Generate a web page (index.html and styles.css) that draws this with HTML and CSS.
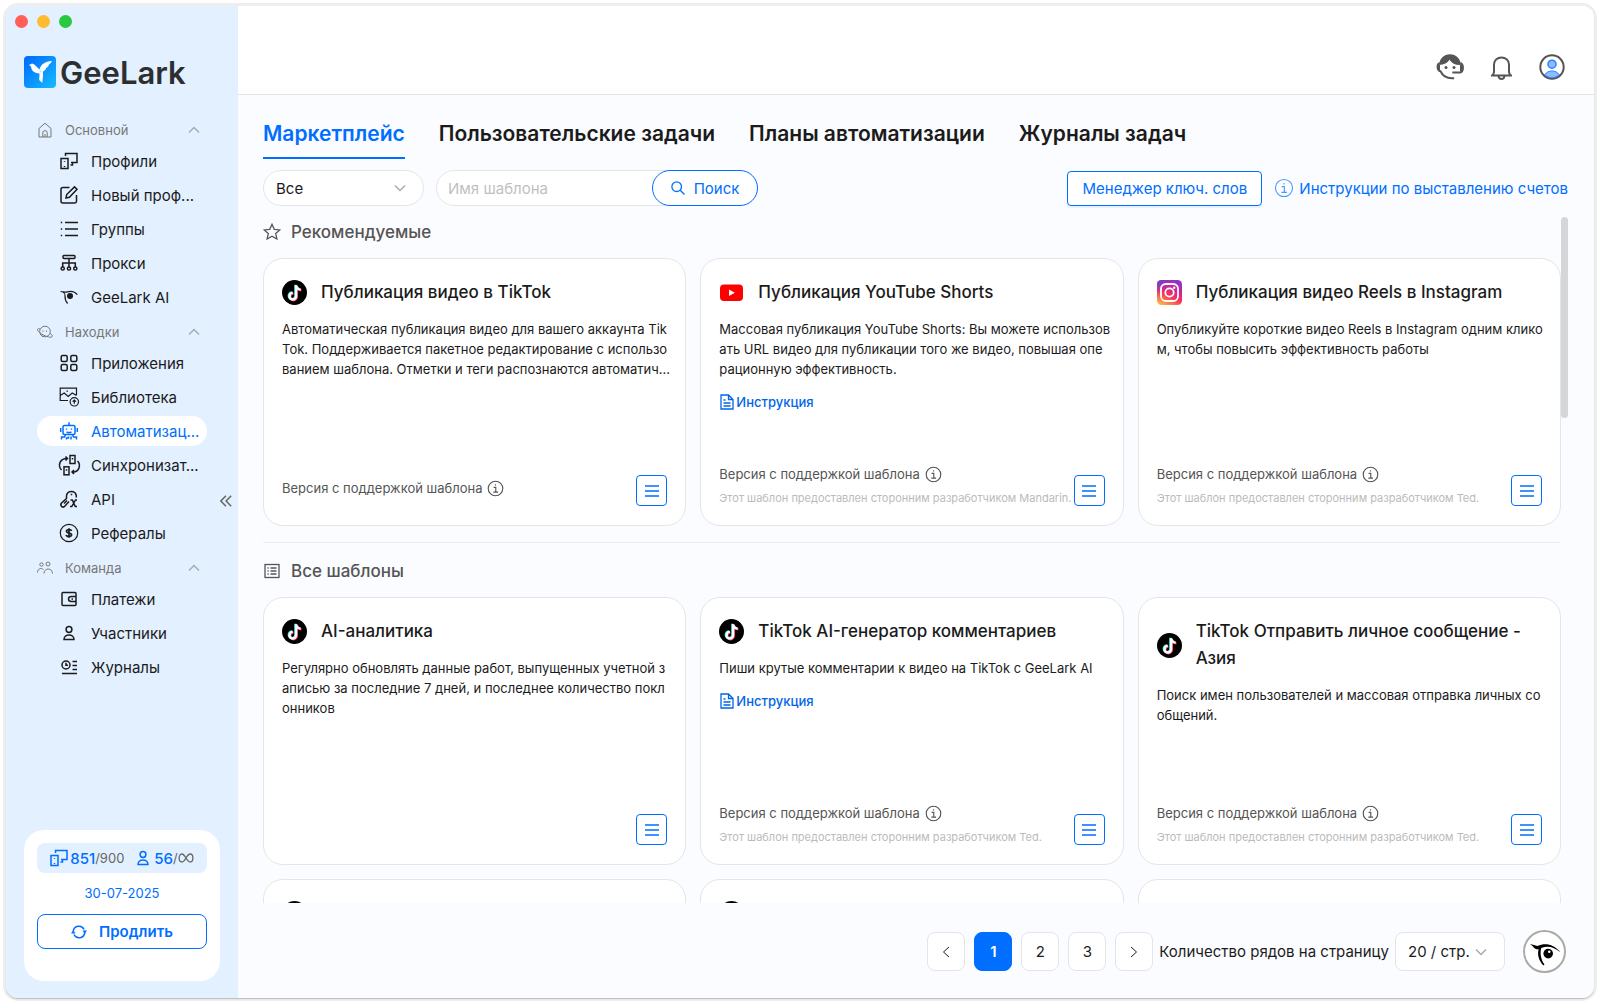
FILE: index.html
```html
<!DOCTYPE html>
<html lang="ru">
<head>
  <meta charset="UTF-8">
  <meta name="viewport" content="width=device-width, initial-scale=1.0">
  <title>GeeLark</title>
  <link rel="stylesheet" href="styles.css">
</head>
<body>
  <!-- Общие иконки -->
  <svg class="sprite" aria-hidden="true">
    <symbol id="i-up" viewBox="0 0 12 8"><path d="M1 6.500 6 1.500l5 5"/></symbol>
    <symbol id="i-down" viewBox="0 0 12 8"><path d="M1 1.500l5 5 5-5"/></symbol>
    <symbol id="i-phones" viewBox="0 0 18 18"><rect x="1" y="6.500" width="7" height="10"/><path d="M5.500 4V1.500H17v9h-6M12.500 10.500v2.500H10.500M4.500 9v.8M4.500 14v1"/></symbol>
    <symbol id="i-member" viewBox="0 0 18 18"><circle cx="9" cy="5.500" r="2.900"/><path d="M4 15.500c0-6 10-6 10 0z"/></symbol>
    <symbol id="i-menu" viewBox="0 0 14 12"><path d="M0 1h14M0 6h14M0 11h14"/></symbol>
    <symbol id="i-info" viewBox="0 0 18 18"><circle cx="9" cy="9" r="7.700"/><path d="M7 7.800h2.300v5M6.700 12.900h5M9 4.400v1.400"/></symbol>
    <symbol id="i-doc" viewBox="0 0 14 16"><path d="M1 1h7.500L13 5.500V15H1zM8.500 1v4.500H13M3.500 6h2M3.500 9h7M3.500 12h7"/></symbol>
    <symbol id="i-tiktok" viewBox="0 0 25 25">
      <circle cx="12.500" cy="12.500" r="12.500" fill="#000"/>
      <g fill="none" stroke-width="2.400">
        <path stroke="#25f4ee" d="M13.400 4.800v11a3.300 3.300 0 1 1-3.300-3.300M13.400 5c.4 2.500 2 4 4.600 4.200"/>
        <path stroke="#fe2c55" d="M14.800 5.900v11a3.300 3.300 0 1 1-3.300-3.300M14.800 6c.4 2.500 2 4 4.600 4.200"/>
        <path stroke="#fff" d="M14.100 5.200v11a3.300 3.300 0 1 1-3.300-3.300M14.100 5.400c.4 2.500 2 4 4.600 4.200"/>
      </g>
    </symbol>
  </svg>

  <div class="window">
    <aside class="sidebar">
      <div class="lights"><span class="red"></span><span class="yellow"></span><span class="green"></span></div>

      <div class="logo">
        <svg width="32" height="32" viewBox="0 0 32 32">
          <defs><linearGradient id="lg" x1="0" y1="0" x2="1" y2="1"><stop offset="0" stop-color="#0067ff"/><stop offset="1" stop-color="#16bcff"/></linearGradient></defs>
          <rect width="32" height="32" rx="4" fill="url(#lg)"/>
          <path d="M5 9l3-1.500 2 .8 5.500 5.200C17 8 21 5.500 28 5c-1 2-2 3-3 3.500l-.8 2-2 1.500-1 2-2.200 1.500v4.500l-.7 7-3.100-3 .3-6.500C10 17 7.500 15 7 10.500z" fill="#fff"/>
          <path d="M15.500 13.500L18 15l-2.500 3z" fill="#cfe6ff"/>
        </svg>
        <span>GeeLark</span>
      </div>

      <nav class="menu">
        <button class="group">
          <svg class="icon" viewBox="0 0 16 16"><path d="M2 6.500 8 1.200l6 5.300V15H2zM5.800 15v-4.200a2.200 2.200 0 0 1 4.400 0V15M8 12v3"/></svg>
          <span>Основной</span>
          <svg class="chevron" viewBox="0 0 12 8"><use href="#i-up"/></svg>
        </button>
        <a href="#" class="item"><svg class="icon" viewBox="0 0 18 18"><use href="#i-phones"/></svg><span>Профили</span></a>
        <a href="#" class="item"><svg class="icon" viewBox="0 0 18 18"><path d="M9.500 1.500H2.800C1.500 1.500 1 2 1 3.300v12c0 1.200.5 1.700 1.800 1.700h12c1.200 0 1.700-.5 1.700-1.700V9M6 12l.7-3.500L14.500.9 17 3.300l-7.600 8z"/></svg><span>Новый проф...</span></a>
        <a href="#" class="item"><svg class="icon" viewBox="0 0 18 18"><path d="M5 2.500h13M5 9h13M5 15.500h13M.8 2.500h1.400M.8 9h1.400M.8 15.500h1.400"/></svg><span>Группы</span></a>
        <a href="#" class="item"><svg class="icon" viewBox="0 0 18 18"><rect x="3" y="1.500" width="12" height="3" rx="1"/><path d="M9 4.500V13M2.700 13V9h12.600v4"/><circle cx="2.700" cy="14.500" r="1.600"/><circle cx="9" cy="14.500" r="1.600"/><circle cx="15.300" cy="14.500" r="1.600"/></svg><span>Прокси</span></a>
        <a href="#" class="item"><svg class="icon thin" viewBox="0 0 18 18"><path d="M.5 3.500c3 .3 4 .5 6 .6 4-1.400 8-1 10.800 2.600M3 4.500c2 .5 2 1 2 3-.2 3.500.8 6 2.600 8"/><circle cx="10" cy="8" r="2.400" fill="currentColor"/></svg><span>GeeLark AI</span></a>

        <button class="group">
          <svg class="icon" viewBox="0 0 16 16"><circle cx="8" cy="7.500" r="5.300"/><path d="M3 5C-1 4-.5 7 5 10.200c5 3 10.500 4 10.300 1.800-.1-1-1-1.800-2.400-2.700M3 10l3 3M6 6.500v1.300M9.500 6.500v1.300"/></svg>
          <span>Находки</span>
          <svg class="chevron" viewBox="0 0 12 8"><use href="#i-up"/></svg>
        </button>
        <a href="#" class="item"><svg class="icon" viewBox="0 0 18 18"><rect x="1.200" y="1.500" width="6" height="6" rx="1.500"/><rect x="10.800" y="1.500" width="6" height="6" rx="1.500"/><rect x="1.200" y="10.500" width="6" height="6" rx="1.500"/><rect x="10.800" y="10.500" width="6" height="6" rx="1.500"/></svg><span>Приложения</span></a>
        <a href="#" class="item"><svg class="icon thin" viewBox="0 0 18 18"><path d="M8 12.500H.2V.2h16.300V7M.2 7.500 4.200 5l4 3.500 4-3.500 4.300 2.500M6.500 3.200h1.400"/><circle cx="14.300" cy="13.800" r="4.200"/><path d="M14.300 15.800v-3.800M12.600 13.700l1.700-1.700 1.700 1.700"/></svg><span>Библиотека</span></a>
        <a href="#" class="item active"><svg class="icon" viewBox="0 0 18 18"><rect x="3" y="3.500" width="12" height="9" rx="1.500"/><path d="M9 3.500V.2M.7 6v4M17.300 6v4M6.500 6.500v1.200M11.500 6.500v1.200M6.500 9.800c1.500 1 3.500 1 5 0M5.500 12.500l-1 2.500H1.500v2.500M12.500 12.500l1 2.500h3v2.500M8.500 14.500v1.500h-2v1.500M11 14.500v3"/></svg><span>Автоматизац...</span></a>
        <a href="#" class="item"><svg class="icon" viewBox="0 0 18 18"><rect x="10" y="-.5" width="5" height="8"/><rect x="4" y="10.800" width="5" height="8"/><path d="M7.500 2.500H5.500C-1 3.500-2 10.500 1.500 14M5.500.5l2 2-2 2M12 16h2c5.500-1 7-7.500 3.500-11M14 14l-2 2 2 2M12.500 2v1.500M6.500 13.300v1.500"/></svg><span>Синхронизат...</span></a>
        <a href="#" class="item"><svg class="icon" viewBox="0 0 18 18"><path d="M6.500 5.500a5 5 0 0 1 9.800 0v2M6.500 5.500v3L1.500 13c-2 3 1.500 5.500 3.500 3l4-4.500M4 13.500l3-3M11.500 3.800v1.500M10.500 10h1.800l3 6.500H17M17 10h-1.500l-3.700 6.500H10"/></svg><span>API</span></a>
        <a href="#" class="item"><svg class="icon thin" viewBox="0 0 18 18"><circle cx="9" cy="9" r="8.700"/><path stroke-width="1.700" d="M11.500 7c-.3-2-5-2-5 .2 0 2.400 5.100 1.200 5.100 3.600 0 2.300-5.100 2.200-5.400 0M9 4.200v9.600"/></svg><span>Рефералы</span></a>

        <button class="group">
          <svg class="icon" viewBox="0 0 16 16"><circle cx="4.500" cy="4.500" r="1.700"/><circle cx="11" cy="4" r="2"/><path d="M.5 12.500c0-4 4-5 6-3M7 13.500c0-6 8.500-6 8.500 0"/></svg>
          <span>Команда</span>
          <svg class="chevron" viewBox="0 0 12 8"><use href="#i-up"/></svg>
        </button>
        <a href="#" class="item"><svg class="icon" viewBox="0 0 18 18"><rect x="2" y="2.500" width="14" height="13" rx="1"/><path d="M16 6.500h-4.500c-4 0-4 5 0 5H16M11.500 9h1.500"/></svg><span>Платежи</span></a>
        <a href="#" class="item"><svg class="icon" viewBox="0 0 18 18"><use href="#i-member"/></svg><span>Участники</span></a>
        <a href="#" class="item"><svg class="icon" viewBox="0 0 18 18"><circle cx="6" cy="7" r="4"/><path d="M6 4.800V7.300h2M12.500 3.500H17M12.500 7.500H17M12.500 11.500H17M2 15.500h15"/></svg><span>Журналы</span></a>
      </nav>

      <button class="collapse" aria-label="Свернуть">
        <svg width="12" height="12" viewBox="0 0 12 12"><path d="M6 .8.9 6 6 11.200M11.200.8 6.100 6l5.100 5.200"/></svg>
      </button>

      <div class="plan">
        <div class="quota">
          <svg class="icon" viewBox="0 0 18 18"><use href="#i-phones"/></svg><b>851</b><i>/900</i>
          <svg class="icon people" viewBox="0 0 18 18"><use href="#i-member"/></svg><b>56</b><i>/</i><svg class="inf" viewBox="0 0 16 10"><path d="M8 5C6.500 2.500 5.500 1 3.900 1 .2 1 .2 9 3.900 9 7.500 9 8.500 1 12.100 1c3.700 0 3.700 8 0 8C10.500 9 9.500 7.500 8 5z"/></svg>
        </div>
        <div class="date">30-07-2025</div>
        <button class="renew">
          <svg width="16" height="16" viewBox="0 0 16 16"><path d="M2.200 7a5.800 5.800 0 0 1 10.900-1.500M13.800 9A5.800 5.800 0 0 1 2.900 10.500"/><path class="solid" d="M0 9.500h4.500L2.300 6zM11.500 6.500H16L13.700 10z"/></svg>
          Продлить
        </button>
      </div>
    </aside>

    <main class="main">
      <header class="topbar">
        <button aria-label="Поддержка">
          <svg width="28" height="28" viewBox="0 0 28 28"><path class="dark" d="M3.200 12C3.500 5.500 8 1.200 14 1.200S24.500 5.500 24.800 12c-5 .3-9-1.500-11.300-5.200C11.500 10 8 12 3.200 12z"/><path class="line" d="M3.700 10c-3 1.500-3 7.500 1 8.500 2 4.500 6 6.700 11 6.700h2.500M24.300 10c3.500 1 3.500 8.500 0 9.500h-8"/><path class="line" d="M3 12v5M25 12v6"/><circle class="dark" cx="10" cy="14.500" r="1.500"/><circle class="dark" cx="18" cy="14.500" r="1.500"/></svg>
        </button>
        <button aria-label="Уведомления">
          <svg width="28" height="28" viewBox="0 0 28 28"><path class="line" d="M4 22.500h21M6 22l1-3v-7.500c0-9.500 15-9.500 15 0V19l1 3M11.500 23c.5 4 5.500 4 6 0"/></svg>
        </button>
        <button aria-label="Аккаунт">
          <svg width="28" height="28" viewBox="0 0 28 28"><circle class="line" cx="14" cy="14" r="11.700"/><circle cx="14" cy="11.200" r="4" fill="#8bbcff" stroke="#2b83ff" stroke-width="1.500"/><path d="M6.800 21.700c3-5 11.400-5 14.400 0-4 4-10.400 4-14.400 0z" fill="#8bbcff" stroke="#2b83ff"/></svg>
        </button>
      </header>

      <div class="content">
        <nav class="tabs">
          <a href="#" class="active">Маркетплейс</a>
          <a href="#">Пользовательские задачи</a>
          <a href="#">Планы автоматизации</a>
          <a href="#">Журналы задач</a>
        </nav>

        <div class="filters">
          <div class="select round">
            <select aria-label="Платформа"><option>Все</option></select>
            <svg viewBox="0 0 12 8"><use href="#i-down"/></svg>
          </div>
          <div class="search">
            <input type="text" placeholder="Имя шаблона" aria-label="Имя шаблона">
            <button>
              <svg width="14" height="14" viewBox="0 0 14 14"><circle cx="5.700" cy="5.700" r="4.800"/><path d="M9.200 9.200l4.300 4.300"/></svg>
              Поиск
            </button>
          </div>
          <button class="keywords">Менеджер ключ. слов</button>
          <a href="#" class="billing"><svg width="20" height="20" viewBox="0 0 18 18"><use href="#i-info"/></svg>Инструкции по выставлению счетов</a>
        </div>

        <div class="list">
          <h2>
            <svg width="18" height="18" viewBox="0 0 18 18"><path d="M9 1.300l2.300 5 5.500.6-4.100 3.700 1.200 5.400L9 13.300 4.100 16l1.200-5.400L1.200 6.900l5.500-.6z"/></svg>
            Рекомендуемые
          </h2>
          <div class="cards">
            <article class="card">
              <h3><svg class="brand" viewBox="0 0 25 25"><use href="#i-tiktok"/></svg><span>Публикация видео в TikTok</span></h3>
              <p>Автоматическая публикация видео для вашего аккаунта Tik<br>Tok. Поддерживается пакетное редактирование с использо<br>ванием шаблона. Отметки и теги распознаются автоматич...</p>
              <footer>
                <div class="version single">Версия с поддержкой шаблона <svg viewBox="0 0 18 18"><use href="#i-info"/></svg></div>
                <button aria-label="Меню"><svg viewBox="0 0 14 12"><use href="#i-menu"/></svg></button>
              </footer>
            </article>
            <article class="card">
              <h3><svg class="brand" viewBox="0 0 25 25"><rect x="1" y="4.500" width="23" height="16.500" rx="4" fill="#f00"/><path d="M10 9.500v6.500l5.800-3.200z" fill="#fff"/></svg><span>Публикация YouTube Shorts</span></h3>
              <p>Массовая публикация YouTube Shorts: Вы можете использов<br>ать URL видео для публикации того же видео, повышая опе<br>рационную эффективность.</p>
              <a href="#" class="guide"><svg viewBox="0 0 14 16"><use href="#i-doc"/></svg>Инструкция</a>
              <footer>
                <div>
                  <div class="version">Версия с поддержкой шаблона <svg viewBox="0 0 18 18"><use href="#i-info"/></svg></div>
                  <small>Этот шаблон предоставлен сторонним разработчиком Mandarin.</small>
                </div>
                <button aria-label="Меню"><svg viewBox="0 0 14 12"><use href="#i-menu"/></svg></button>
              </footer>
            </article>
            <article class="card">
              <h3>
                <svg class="brand" viewBox="0 0 25 25">
                  <defs>
                    <linearGradient id="ig" x1="0.200" y1="1" x2="0.700" y2="0"><stop offset="0" stop-color="#ffb545"/><stop offset=".4" stop-color="#f5355b"/><stop offset=".7" stop-color="#d0209a"/><stop offset="1" stop-color="#8a35c8"/></linearGradient>
                    <radialGradient id="ig2" cx="0" cy="0" r="0.600"><stop offset="0" stop-color="#4a50d8"/><stop offset="1" stop-color="#8a35c8" stop-opacity="0"/></radialGradient>
                  </defs>
                  <rect width="25" height="25" rx="4.500" fill="url(#ig)"/><rect width="25" height="25" rx="4.500" fill="url(#ig2)"/>
                  <g fill="none" stroke="#fff" stroke-width="1.800"><rect x="4" y="4" width="17" height="17" rx="4.800"/><circle cx="12.500" cy="12.500" r="4.200"/></g><circle cx="17.200" cy="7.800" r="1.200" fill="#fff"/>
                </svg>
                <span>Публикация видео Reels в Instagram</span>
              </h3>
              <p>Опубликуйте короткие видео Reels в Instagram одним клико<br>м, чтобы повысить эффективность работы</p>
              <footer>
                <div>
                  <div class="version">Версия с поддержкой шаблона <svg viewBox="0 0 18 18"><use href="#i-info"/></svg></div>
                  <small>Этот шаблон предоставлен сторонним разработчиком Ted.</small>
                </div>
                <button aria-label="Меню"><svg viewBox="0 0 14 12"><use href="#i-menu"/></svg></button>
              </footer>
            </article>
          </div>

          <hr>

          <h2>
            <svg width="18" height="18" viewBox="0 0 18 18"><rect x="2" y="2.500" width="14" height="13"/><path d="M7.500 6h6M7.500 9h6M7.500 12h6M4.500 6h1.200M4.500 9h1.200M4.500 12h1.200"/></svg>
            Все шаблоны
          </h2>
          <div class="cards">
            <article class="card">
              <h3><svg class="brand" viewBox="0 0 25 25"><use href="#i-tiktok"/></svg><span>AI-аналитика</span></h3>
              <p>Регулярно обновлять данные работ, выпущенных учетной з<br>аписью за последние 7 дней, и последнее количество покл<br>онников</p>
              <footer>
                <button aria-label="Меню"><svg viewBox="0 0 14 12"><use href="#i-menu"/></svg></button>
              </footer>
            </article>
            <article class="card">
              <h3><svg class="brand" viewBox="0 0 25 25"><use href="#i-tiktok"/></svg><span>TikTok AI-генератор комментариев</span></h3>
              <p>Пиши крутые комментарии к видео на TikTok с GeeLark AI</p>
              <a href="#" class="guide"><svg viewBox="0 0 14 16"><use href="#i-doc"/></svg>Инструкция</a>
              <footer>
                <div>
                  <div class="version">Версия с поддержкой шаблона <svg viewBox="0 0 18 18"><use href="#i-info"/></svg></div>
                  <small>Этот шаблон предоставлен сторонним разработчиком Ted.</small>
                </div>
                <button aria-label="Меню"><svg viewBox="0 0 14 12"><use href="#i-menu"/></svg></button>
              </footer>
            </article>
            <article class="card">
              <h3><svg class="brand" viewBox="0 0 25 25"><use href="#i-tiktok"/></svg><span>TikTok Отправить личное сообщение -<br>Азия</span></h3>
              <p>Поиск имен пользователей и массовая отправка личных со<br>общений.</p>
              <footer>
                <div>
                  <div class="version">Версия с поддержкой шаблона <svg viewBox="0 0 18 18"><use href="#i-info"/></svg></div>
                  <small>Этот шаблон предоставлен сторонним разработчиком Ted.</small>
                </div>
                <button aria-label="Меню"><svg viewBox="0 0 14 12"><use href="#i-menu"/></svg></button>
              </footer>
            </article>
            <article class="card"><h3><svg class="brand" viewBox="0 0 25 25"><use href="#i-tiktok"/></svg></h3></article>
            <article class="card"><h3><svg class="brand" viewBox="0 0 25 25"><use href="#i-tiktok"/></svg></h3></article>
            <article class="card"></article>
          </div>
        </div>
        <div class="scrollbar"></div>

        <div class="pager">
          <button aria-label="Назад"><svg width="8" height="12" viewBox="0 0 8 12"><path d="M7 1 1.500 6 7 11"/></svg></button>
          <button class="current">1</button>
          <button>2</button>
          <button>3</button>
          <button aria-label="Вперёд"><svg width="8" height="12" viewBox="0 0 8 12"><path d="M1 1l5.500 5L1 11"/></svg></button>
          <label for="rows">Количество рядов на страницу</label>
          <div class="select rows">
            <select id="rows"><option>20 / стр.</option></select>
            <svg viewBox="0 0 12 8"><use href="#i-down"/></svg>
          </div>
          <button class="assistant" aria-label="GeeLark AI">
            <svg width="32" height="32" viewBox="0 0 30 30"><path d="M1 7.500l7 1.800c7-3 15-2 21.500 6-6-5-12-6.500-18-4-1.500 5 0 11.500 3 15.500l-1 .8C9.500 23.500 7.500 18 9 12.500c-3-.2-4.500-1-5-2.500z"/><circle cx="18" cy="16.500" r="4.500"/><circle cx="19" cy="14.800" r="1.200" fill="#fff"/></svg>
          </button>
        </div>
      </div>
    </main>
  </div>
</body>
</html>
```
FILE: styles.css
```css
:root {
  --blue: #006eff;
  --text: #1b1b1b;
  --muted: #555;
  --border: #e4e5e7;
  --side: #e3f0ff;
}

* {
  box-sizing: border-box;
}

body {
  margin: 0;
  padding: 6px 6px 7px;
  height: 100vh;
  background: #fff;
  color: var(--text);
  font-family: Inter, "Liberation Sans", sans-serif;
  font-size: 15px;
}

button, input, select {
  font: inherit;
  color: inherit;
}

button {
  padding: 0;
  border: none;
  background: none;
  cursor: pointer;
}

a {
  color: inherit;
  text-decoration: none;
}

svg {
  flex: none;
  fill: none;
  stroke: currentColor;
}

.sprite {
  position: absolute;
  width: 0;
  height: 0;
}

.window {
  display: flex;
  height: 100%;
  border-radius: 12px;
  overflow: hidden;
  box-shadow: 0 1px 1px #bbb, 0 0 0 3px #eee;
}

/* Боковая панель */
.sidebar {
  position: relative;
  display: flex;
  flex-direction: column;
  flex: none;
  width: 232px;
  padding: 9px 18px 17px;
  background: var(--side);
}

.lights {
  display: flex;
  gap: 9px;
  margin-left: -9px;
}

.lights span {
  width: 13px;
  height: 13px;
  border-radius: 50%;
}

.red { background: #ff5f57; }
.yellow { background: #febc2e; }
.green { background: #28c840; }

.logo {
  display: flex;
  align-items: center;
  gap: 4px;
  height: 32px;
  margin: 28px 0;
  font-size: 31px;
  font-weight: 600;
  color: #2c2e30;
}

.logo svg {
  stroke: none;
}

.menu {
  display: flex;
  flex: 1;
  flex-direction: column;
}

.group {
  display: flex;
  align-items: center;
  height: 28px;
  padding: 0 20px 0 13px;
  font-size: 13px;
  color: #777;
}

.group ~ .group {
  margin-top: 4px;
}

.group .icon {
  width: 16px;
  height: 16px;
  margin-right: 12px;
}

.chevron {
  width: 12px;
  height: 8px;
  margin-left: auto;
  color: #aaa;
  stroke-width: 1.5px;
}

.item {
  display: flex;
  align-items: center;
  gap: 13px;
  height: 30px;
  margin: 2px 13px;
  padding-left: 23px;
  border-radius: 15px;
  white-space: nowrap;
}

.item .icon {
  width: 18px;
  height: 18px;
  overflow: visible;
  stroke-width: 1.5px;
}

.item .thin {
  stroke-width: 1.2px;
}

.item.active {
  background: #fff;
  color: var(--blue);
}

.collapse {
  position: absolute;
  right: 6px;
  top: 489px;
  line-height: 0;
  color: #666;
  stroke-width: 1.5px;
}

.plan {
  display: flex;
  flex-direction: column;
  height: 151px;
  padding: 13px;
  border-radius: 20px;
  background: #fff;
  color: var(--blue);
}

.quota {
  display: flex;
  align-items: center;
  justify-content: center;
  height: 30px;
  border-radius: 8px;
  background: var(--side);
}

.quota .icon {
  width: 18px;
  height: 18px;
  margin-right: 2px;
  stroke-width: 1.5px;
}

.quota .people {
  margin-left: 10px;
}

.quota b {
  font-weight: 500;
}

.quota i {
  font-style: normal;
  font-size: 13px;
  color: #666;
}

.quota .inf {
  width: 16px;
  height: 10px;
  color: #666;
  stroke-width: 1.3px;
}

.date {
  line-height: 41px;
  font-size: 13px;
  text-align: center;
}

.renew {
  display: flex;
  align-items: center;
  justify-content: center;
  gap: 12px;
  height: 35px;
  border: 1px solid var(--blue);
  border-radius: 8px;
  font-weight: 600;
}

.renew svg {
  stroke-width: 1.5px;
}

.renew .solid {
  fill: currentColor;
  stroke: none;
}

/* Основная часть */
.main {
  display: flex;
  flex: 1;
  flex-direction: column;
  min-width: 0;
  background: #fbfcff;
}

.topbar {
  display: flex;
  justify-content: flex-end;
  align-items: flex-end;
  gap: 23px;
  flex: none;
  height: 89px;
  padding: 0 28px 13px;
  border-bottom: 1px solid var(--border);
  background: #fff;
}

.topbar button {
  height: 28px;
  color: #555;
}

.topbar .line {
  stroke-width: 2px;
}

.topbar .dark {
  fill: currentColor;
  stroke: none;
}

.content {
  position: relative;
  display: flex;
  flex: 1;
  flex-direction: column;
  min-height: 0;
  padding: 22px 26px 25px 25px;
}

.tabs {
  display: flex;
  gap: 34px;
  font-size: 21px;
  font-weight: 600;
}

.tabs a {
  height: 42px;
  line-height: 34px;
}

.tabs .active {
  color: var(--blue);
  border-bottom: 2px solid var(--blue);
}

.filters {
  display: flex;
  align-items: center;
  margin-top: 11px;
}

.select {
  position: relative;
}

.select select {
  width: 100%;
  height: 100%;
  padding: 0 12px;
  border: 1px solid var(--border);
  border-radius: 8px;
  background: #fff;
  appearance: none;
}

.select svg {
  position: absolute;
  top: calc(50% - 4px);
  right: 18px;
  width: 12px;
  height: 8px;
  color: #aaa;
  stroke-width: 1.5px;
  pointer-events: none;
}

.round {
  width: 161px;
  height: 36px;
  margin-right: 12px;
}

.round select {
  border-radius: 18px;
}

.search {
  display: flex;
  width: 322px;
  height: 36px;
  border: 1px solid var(--border);
  border-radius: 18px;
  background: #fff;
}

.search input {
  flex: 1;
  min-width: 0;
  padding: 0 11px;
  border: none;
  background: none;
  outline: none;
}

.search input::placeholder {
  color: #bfbfbf;
}

.search button {
  display: flex;
  align-items: center;
  justify-content: center;
  gap: 9px;
  width: 106px;
  margin: -1px;
  border: 1px solid var(--blue);
  border-radius: 18px;
  background: #fff;
  color: var(--blue);
}

.search svg {
  stroke-width: 1.3px;
}

.keywords {
  width: 195px;
  height: 35px;
  margin-left: auto;
  border: 1px solid var(--blue);
  border-radius: 4px;
  background: #fff;
  color: var(--blue);
  box-shadow: 0 2px 0 #e6f2ff;
}

.billing {
  display: flex;
  align-items: center;
  gap: 5px;
  margin-left: 12px;
  color: var(--blue);
}

.billing svg {
  opacity: 0.7;
}

.list {
  flex: 1;
  min-height: 0;
  margin-right: 7px;
  overflow: hidden;
}

.list h2 {
  display: flex;
  align-items: center;
  gap: 10px;
  height: 52px;
  margin: 0;
  font-size: 17px;
  font-weight: 500;
  color: var(--muted);
}

.list h2 svg {
  stroke-width: 1.3px;
}

.list hr {
  margin: 16px 0 2px;
  border: none;
  border-top: 1px solid #eceef0;
}

.cards {
  display: grid;
  grid-template-columns: repeat(3, 1fr);
  grid-auto-rows: 268px;
  gap: 14px;
}

.card {
  display: flex;
  flex-direction: column;
  min-width: 0;
  padding: 20px 18px 13px;
  border: 1px solid var(--border);
  border-radius: 20px;
  background: #fff;
}

.card h3 {
  display: flex;
  align-items: center;
  gap: 14px;
  min-height: 27px;
  margin: 0 0 13px;
  font-size: 17px;
  font-weight: 500;
  line-height: 27px;
}

.brand {
  width: 25px;
  height: 25px;
  stroke: none;
}

.card p {
  margin: 0;
  font-size: 13px;
  line-height: 20px;
  white-space: nowrap;
}

.guide {
  display: flex;
  align-items: center;
  gap: 2px;
  margin-top: 13px;
  font-size: 13px;
  font-weight: 500;
  line-height: 20px;
  color: #0065e8;
}

.guide svg {
  width: 14px;
  height: 16px;
  margin-left: 1px;
  stroke-width: 1.3px;
}

.card footer {
  display: flex;
  align-items: flex-end;
  justify-content: space-between;
  margin-top: auto;
}

.card footer button {
  display: flex;
  align-items: center;
  justify-content: center;
  width: 31px;
  height: 31px;
  margin: 0 0 6px auto;
  border: 1px solid var(--blue);
  border-radius: 4px;
  color: var(--blue);
}

.card footer button svg {
  width: 14px;
  height: 12px;
  stroke-width: 1.3px;
}

.version {
  display: flex;
  align-items: center;
  gap: 5px;
  height: 20px;
  font-size: 13px;
  color: var(--muted);
}

.version svg {
  width: 17px;
  height: 17px;
  stroke-width: 1.2px;
}

.version.single {
  margin-bottom: 14px;
}

.card small {
  display: block;
  height: 28px;
  line-height: 28px;
  font-size: 11px;
  color: #bbb;
  white-space: nowrap;
}

.scrollbar {
  position: absolute;
  top: 122px;
  right: 26px;
  width: 7px;
  height: 201px;
  border-radius: 4px;
  background: #d5d6d8;
}

.pager {
  display: flex;
  align-items: center;
  justify-content: flex-end;
  gap: 9px;
  flex: none;
  margin: 27px 2px 0;
}

.pager button {
  display: flex;
  align-items: center;
  justify-content: center;
  width: 38px;
  height: 39px;
  border: 1px solid var(--border);
  border-radius: 8px;
  background: #fff;
}

.pager .current {
  border-color: var(--blue);
  background: var(--blue);
  color: #fff;
  font-weight: 600;
}

.pager label {
  margin: 0 -3px;
}

.rows {
  width: 110px;
  height: 39px;
}

.pager .assistant {
  width: 43px;
  height: 43px;
  margin-left: 9px;
  border: 2px solid #aaa;
  border-radius: 50%;
}

.assistant svg {
  fill: #000;
  stroke: none;
}
```
